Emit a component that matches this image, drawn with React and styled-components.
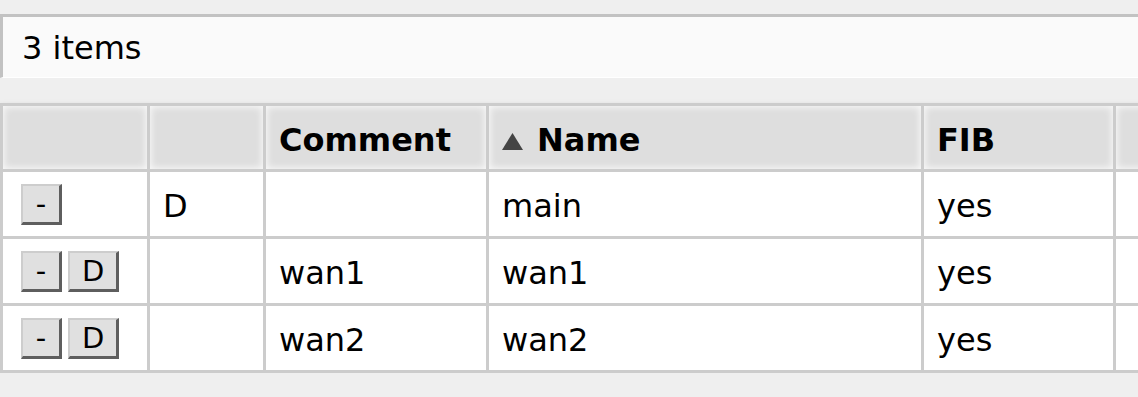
import React from "react";
import styled, { createGlobalStyle } from "styled-components";

const GlobalStyle = createGlobalStyle`
  *, *::before, *::after { box-sizing: border-box; }
  html, body {
    margin: 0;
    padding: 0;
    background: #efefef;
    overflow: hidden;
  }
  body {
    font-family: Verdana, "DejaVu Sans", sans-serif;
    font-size: 32px;
    color: #000;
  }
`;

const Page = styled.div`
  padding-top: 14px;
`;

const StatusBar = styled.div`
  height: 64px;
  background: #fafafa;
  border-top: 3px solid #c2c2c2;
  border-left: 3px solid #c2c2c2;
  border-bottom: 1px solid #fff;
  display: flex;
  align-items: center;
  padding: 2px 0 0 19px;
  margin-bottom: 25px;
  white-space: nowrap;
`;

const Frame = styled.div`
  width: 1419px;
  box-shadow: 0 4px 7px rgba(0, 0, 0, 0.22);
`;

const Grid = styled.table`
  table-layout: fixed;
  width: 100%;
  border-collapse: separate;
  border-spacing: 3px;
  background: #cccccc;
`;

const HeadCell = styled.th`
  width: ${(p) => p.$w}px;
  height: 63px;
  padding: 4px 13px 0;
  background: #dedede;
  box-shadow: inset 0 0 7px 1px rgba(255, 255, 255, 0.85);
  text-align: left;
  font-weight: bold;
  white-space: nowrap;
  vertical-align: middle;
`;

const SortMark = styled.svg`
  width: 21px;
  height: 17px;
  margin-right: 14px;
  vertical-align: 1px;
`;

const Cell = styled.td`
  height: 64px;
  padding: 4px 13px 0;
  background: #fff;
  white-space: nowrap;
  vertical-align: middle;
`;

const ActionCell = styled(Cell)`
  padding: 0 13px 0 18px;
`;

const Actions = styled.div`
  display: flex;
  gap: 6px;
`;

const RowButton = styled.button`
  min-width: 41px;
  height: 41px;
  padding: 2px 12px 0;
  margin: 0;
  font-family: inherit;
  font-size: 29px;
  line-height: 1;
  color: #000;
  background: #e0e0e0;
  border-style: solid;
  border-width: 2px 3px 3px 2px;
  border-color: #cdcdcd #5e5e5e #5e5e5e #cdcdcd;
  border-radius: 0;
  cursor: pointer;
`;

const columns = [
  { key: "act", label: "", w: 144 },
  { key: "flag", label: "", w: 113 },
  { key: "comment", label: "Comment", w: 220 },
  { key: "name", label: "Name", w: 432, sorted: true },
  { key: "fib", label: "FIB", w: 189 },
  { key: "more", label: "", w: 300 },
];

const rows = [
  { id: 1, flag: "D", comment: "", name: "main", fib: "yes", disable: false },
  { id: 2, flag: "", comment: "wan1", name: "wan1", fib: "yes", disable: true },
  { id: 3, flag: "", comment: "wan2", name: "wan2", fib: "yes", disable: true },
];

export default function App() {
  return (
    <Page>
      <GlobalStyle />
      <StatusBar>3 items</StatusBar>
      <Frame>
        <Grid>
          <thead>
            <tr>
              {columns.map((c) => (
                <HeadCell key={c.key} $w={c.w}>
                  {c.sorted && (
                    <SortMark viewBox="0 0 21 17">
                      <polygon points="10.5,0 21,17 0,17" fill="#444" />
                    </SortMark>
                  )}
                  {c.label}
                </HeadCell>
              ))}
            </tr>
          </thead>
          <tbody>
            {rows.map((r) => (
              <tr key={r.id}>
                <ActionCell>
                  <Actions>
                    <RowButton>-</RowButton>
                    {r.disable && <RowButton>D</RowButton>}
                  </Actions>
                </ActionCell>
                <Cell>{r.flag}</Cell>
                <Cell>{r.comment}</Cell>
                <Cell>{r.name}</Cell>
                <Cell>{r.fib}</Cell>
                <Cell />
              </tr>
            ))}
          </tbody>
        </Grid>
      </Frame>
    </Page>
  );
}
